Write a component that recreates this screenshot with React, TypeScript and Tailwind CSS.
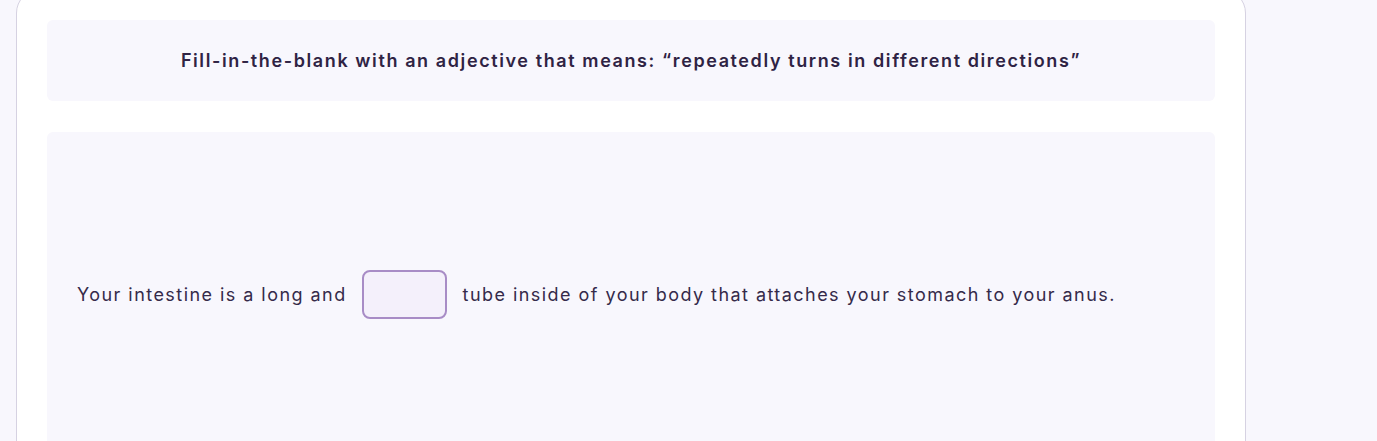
export default function App() {
  return (
    <div className="min-h-[441px] bg-[#f8f7fd] pl-4 pr-[131px] overflow-hidden font-['Inter',sans-serif]">
      <div className="-mt-[11px] rounded-[24px] border border-[#d6d2e2] bg-white px-[30px] pt-[30px] pb-8">
        {/* Prompt */}
        <div className="flex h-[81px] items-center justify-center rounded-md bg-[#f8f7fd]">
          <p className="text-[18px] font-semibold tracking-[1.6px] text-[#2f2344]">
            Fill-in-the-blank with an adjective that means: “repeatedly turns in different directions”
          </p>
        </div>

        {/* Sentence */}
        <div className="mt-[31px] flex min-h-[324px] items-center rounded-md bg-[#f8f7fd] px-[30px]">
          <p className="flex items-center text-[18px] tracking-[1.45px] text-[#352a4a]">
            <span>Your intestine is a long and</span>
            <input
              type="text"
              className="ml-[15px] mr-[16px] h-[49px] w-[85px] rounded-lg border-2 border-[#a88cc6] bg-[#f4f0fb] outline-none"
            />
            <span>tube inside of your body that attaches your stomach to your anus.</span>
          </p>
        </div>
      </div>
    </div>
  );
}
